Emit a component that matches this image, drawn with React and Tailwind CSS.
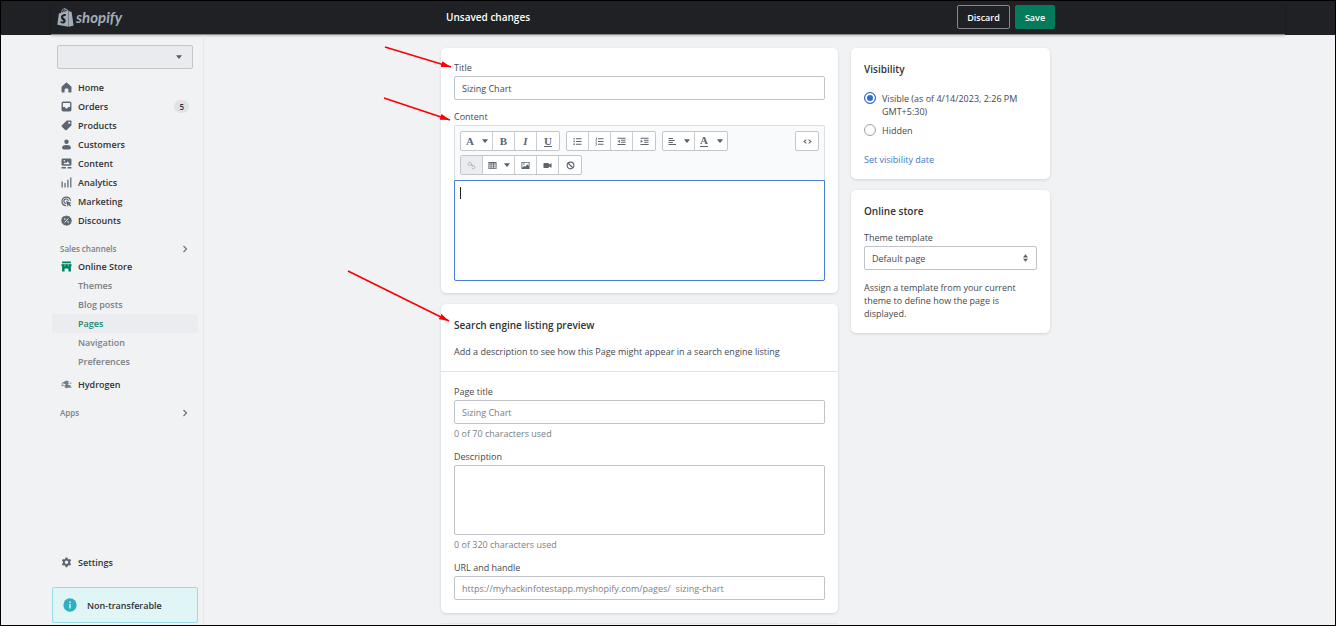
import React from 'react';
import { FaShopify } from 'react-icons/fa';

const Glyph = ({ children, className = 'size-[11px]' }) => (
  <svg viewBox="0 0 20 20" fill="currentColor" aria-hidden="true" className={`shrink-0 ${className}`}>
    {children}
  </svg>
);

const HomeIcon = () => (
  <Glyph>
    <path d="M18.5 8 10.9 1.4a1.4 1.4 0 0 0-1.8 0L1.5 8c-.4.3-.5.8-.5 1.2V17.500c0 .8.7 1.500 1.500 1.500H6.500V14a2 2 0 0 1 2-2h3a2 2 0 0 1 2 2v5h4c.8 0 1.500-.7 1.500-1.500V9.200c0-.5-.1-.9-.5-1.200Z" />
  </Glyph>
);
const OrdersIcon = () => (
  <Glyph>
    <path fillRule="evenodd" d="M4 1h12a3 3 0 0 1 3 3v12a3 3 0 0 1-3 3H4a3 3 0 0 1-3-3V4a3 3 0 0 1 3-3Zm-.500 2.500V11h2.700c.6 0 .9.300 1.100.8.400 1 1.400 1.700 2.700 1.700s2.300-.7 2.700-1.700c.2-.5.500-.8 1.100-.8h2.700V3.500H3.500Z" />
  </Glyph>
);
const ProductsIcon = () => (
  <Glyph>
    <path fillRule="evenodd" d="M11 1h7a1 1 0 0 1 1 1v7c0 .5-.2 1-.6 1.400l-8 8a2 2 0 0 1-2.800 0l-6-6a2 2 0 0 1 0-2.800l8-8C10 1.200 10.500 1 11 1Zm4 6a2 2 0 1 0 0-4 2 2 0 0 0 0 4Z" />
  </Glyph>
);
const CustomersIcon = () => (
  <Glyph>
    <circle cx="10" cy="5" r="4" />
    <path d="M2 15.500c0-3 3.500-4.500 8-4.500s8 1.500 8 4.500c0 2-1.300 3.500-3.300 3.500H5.300C3.300 19 2 17.500 2 15.500Z" />
  </Glyph>
);
const ContentIcon = () => (
  <Glyph>
    <path fillRule="evenodd" d="M3 1h14a2 2 0 0 1 2 2v9a2 2 0 0 1-2 2H3a2 2 0 0 1-2-2V3a2 2 0 0 1 2-2Zm1 10.500h12L12.300 6 9.500 9.500 7.500 7.500 4 11.500ZM6 6.500a1.500 1.500 0 1 0 0-3 1.500 1.500 0 0 0 0 3Z" />
    <path d="M1 16.500h8V19H1zM12 16.500h7V19h-7z" />
  </Glyph>
);
const AnalyticsIcon = () => (
  <Glyph>
    <path d="M1 8h2.200v11H1zM6.200 11h2.200v8H6.200zM11.500 5h2.200v14h-2.200zM16.700 1h2.200v18h-2.200z" />
  </Glyph>
);
const MarketingIcon = () => (
  <Glyph>
    <path d="M8.500 17.500A7.800 7.800 0 1 1 17.300 8M8.300 13.300A4 4 0 1 1 13 8" fill="none" stroke="currentColor" strokeWidth="2.200" strokeLinecap="round" />
    <path d="m9 8.500 10.500 4-4 1.800 3 3-1.700 1.700-3-3-1.500 3.800L9 8.500Z" />
  </Glyph>
);
const DiscountsIcon = () => (
  <Glyph>
    <path d="m10 .5 2.300 1.600 2.800-.2 1.200 2.500 2.500 1.300-.2 2.700L20 10l-1.400 2.200.2 2.800-2.500 1.200-1.300 2.500-2.700-.2L10 19.800l-2.300-1.500-2.800.2-1.200-2.500L1.200 15l.2-2.800L0 10l1.400-2.300L1.200 5l2.500-1.300L5 1.900l2.700.2L10 .5Z" />
    <path d="m6.500 13.500 7-7" stroke="#f1f2f4" strokeWidth="1.800" />
    <circle cx="7" cy="7.200" r="1.500" fill="#f1f2f4" />
    <circle cx="13" cy="12.800" r="1.500" fill="#f1f2f4" />
  </Glyph>
);
const StoreIcon = () => (
  <Glyph className="size-[11px] text-[#008060]">
    <path d="M2 1h16v3.500H2zM1 5.500h18V8a3.500 3.500 0 0 1-1 2.500V19h-4.500v-4a1.500 1.500 0 0 0-1.500-1.500H8A1.500 1.500 0 0 0 6.500 15v4H2v-8.500A3.500 3.500 0 0 1 1 8V5.500Z" />
    <path d="M7 6v3.500M13 6v3.500M1 5h18" stroke="#f1f2f4" strokeWidth="1" />
  </Glyph>
);
const HydrogenIcon = () => (
  <Glyph>
    <path d="M10 2.500 15 5l-2.500 1.500L15 7.800l-3.500 1.700 7.500 3.300L10.500 17l-5-2.500L8 13.300l-2.500-1.500L9 10 2 7l8-4.500Z" opacity=".85" />
    <path d="M1 12h4M1 9h3M14 15h5M16 7.500h3" stroke="currentColor" strokeWidth="1.500" />
  </Glyph>
);
const SettingsIcon = () => (
  <Glyph>
    <path fillRule="evenodd" d="M8.300.8h3.400l.6 2.600 1.800 1 2.500-.8 1.800 3-2 1.900v2.200l2 1.900-1.800 3-2.500-.8-1.800 1-.6 2.700H8.300l-.6-2.700-1.800-1-2.500.8-1.800-3 2-1.900V8.500l-2-1.900 1.800-3 2.500.8 1.800-1L8.300.8ZM10 12.800a3.200 3.200 0 1 0 0-6.400 3.200 3.200 0 0 0 0 6.400Z" />
  </Glyph>
);
const Chevron = () => (
  <svg viewBox="0 0 8 8" aria-hidden="true" className="size-[8px]">
    <path d="m2.500 1 3 3-3 3" fill="none" stroke="#6d7378" strokeWidth="1.200" />
  </svg>
);
const Caret = () => (
  <svg viewBox="0 0 8 5" aria-hidden="true" className="h-[4px] w-[6px] shrink-0">
    <path d="M0 0h8L4 5z" fill="#565c63" />
  </svg>
);

const mainNav = [
  ['Home', HomeIcon],
  ['Orders', OrdersIcon, '5'],
  ['Products', ProductsIcon],
  ['Customers', CustomersIcon],
  ['Content', ContentIcon],
  ['Analytics', AnalyticsIcon],
  ['Marketing', MarketingIcon],
  ['Discounts', DiscountsIcon],
];
const storeNav = ['Themes', 'Blog posts', 'Pages', 'Navigation', 'Preferences'];

function NavLink({ label, Icon, badge }) {
  return (
    <a href="#" className="flex h-[19px] items-center gap-[6px] pl-[9px] pr-[9px] font-semibold text-[#303236]">
      <span className="flex text-[#5c6670]"><Icon /></span>
      {label}
      {badge && (
        <span className="ml-auto rounded-full bg-[#e0e3e6] px-[5px] leading-[13px] text-[8px]">{badge}</span>
      )}
    </a>
  );
}

function SectionLink({ label }) {
  return (
    <a href="#" className="mt-[10px] flex h-[17px] items-center justify-between pl-[8px] pr-[9px] text-[8px] font-semibold text-[#7b8188]">
      {label}
      <Chevron />
    </a>
  );
}

function Sidebar() {
  return (
    <aside className="flex w-[153px] shrink-0 flex-col border-r border-[#e6e7ea] pb-[2px] pl-px pr-[5px] pt-[10px]">
      <button type="button" aria-label="Switch store" className="ml-[5px] mr-[5px] flex h-[24px] items-center justify-end rounded-[2px] border border-[#c3c6cb] bg-[#eaebee] pr-[10px]">
        <Caret />
      </button>
      <nav className="flex grow flex-col">
        <div className="mt-[9px]">
          {mainNav.map(([label, Icon, badge]) => (
            <NavLink key={label} label={label} Icon={Icon} badge={badge} />
          ))}
        </div>
        <SectionLink label="Sales channels" />
        <NavLink label="Online Store" Icon={StoreIcon} />
        <ul>
          {storeNav.map((label) => (
            <li key={label}>
              <a
                href="#"
                className={
                  label === 'Pages'
                    ? 'flex h-[19px] items-center rounded-[2px] bg-[#ebecef] pl-[26px] font-semibold text-[#1c8a6b]'
                    : 'flex h-[19px] items-center pl-[26px] font-semibold text-[#7b8188]'
                }
              >
                {label}
              </a>
            </li>
          ))}
        </ul>
        <div className="mt-[4px]">
          <NavLink label="Hydrogen" Icon={HydrogenIcon} />
        </div>
        <SectionLink label="Apps" />
        <div className="mt-auto">
          <NavLink label="Settings" Icon={SettingsIcon} />
        </div>
      </nav>
      <div className="mt-[15px] flex h-[36px] items-center gap-[10px] rounded-[2px] border border-[#98dce5] bg-[#dff5f6] pl-[10px] font-semibold text-[#303236]">
        <Glyph className="size-[14px]">
          <circle cx="10" cy="10" r="9.500" fill="#2fafbf" />
          <path d="M9 8.500h2V15H9zM9 5h2v2H9z" fill="#dff5f6" />
        </Glyph>
        Non-transferable
      </div>
    </aside>
  );
}

function Card({ children }) {
  return <section className="rounded-[5px] bg-white shadow-[0_1px_3px_rgba(23,24,24,0.14)]">{children}</section>;
}
const CardTitle = ({ children }) => <h2 className="text-[10px] font-semibold leading-[18px] text-[#303236]">{children}</h2>;
const Label = ({ htmlFor, children }) => (
  <label htmlFor={htmlFor} className="block leading-[17px]">{children}</label>
);

const ToolGroup = ({ children }) => (
  <div className="flex h-[20px] divide-x divide-[#c9ccd1] overflow-hidden rounded-[2px] border border-[#c3c7cc] bg-white text-[#5c6670]">
    {children}
  </div>
);
const Tool = ({ label, children, disabled }) => (
  <button
    type="button"
    aria-label={label}
    disabled={disabled}
    className="flex w-[22px] items-center justify-center disabled:bg-[#ebecef] disabled:text-[#b4b8bd]"
  >
    {children}
  </button>
);
const MenuTool = ({ label, children }) => (
  <button type="button" aria-label={label} className="flex w-[32px] items-center justify-between pl-[5px] pr-[4px]">
    {children}
    <Caret />
  </button>
);

const Serif = ({ className, children }) => (
  <span className={`font-['Liberation_Serif',serif] text-[11px] leading-none ${className}`}>{children}</span>
);
const small = 'size-[9px]';

function Toolbar() {
  return (
    <div className="flex flex-col gap-[4px] rounded-t-[2px] border border-b-0 border-[#dcdfe3] bg-[#f9fafb] px-[5px] py-[5px]">
      <div className="flex gap-[6px]">
        <ToolGroup>
          <MenuTool label="Formatting"><Serif className="font-bold">A</Serif></MenuTool>
          <Tool label="Bold"><Serif className="font-bold">B</Serif></Tool>
          <Tool label="Italic"><Serif className="font-bold italic">I</Serif></Tool>
          <Tool label="Underline"><Serif className="font-bold underline">U</Serif></Tool>
        </ToolGroup>
        <ToolGroup>
          <Tool label="Bulleted list">
            <Glyph className={small}><path d="M1 2.500h3v3H1zM1 8.500h3v3H1zM1 14.500h3v3H1zM6.500 3H19v2.200H6.500zM6.500 9H19v2.200H6.500zM6.500 15H19v2.200H6.500z" /></Glyph>
          </Tool>
          <Tool label="Numbered list">
            <Glyph className={small}><path d="M2 1h2v5H2zM1 8h3v1.500L2.500 11H4v1H1v-1l1.500-2H1zM1 14h3v5H1v-1h1.500v-3H1zM6.500 3H19v2.200H6.500zM6.500 9H19v2.200H6.500zM6.500 15H19v2.200H6.500z" /></Glyph>
          </Tool>
          <Tool label="Outdent">
            <Glyph className={small}><path d="M1 1.500h18V4H1zM9 6h10v2.200H9zM9 10.500h10v2.200H9zM1 15.500h18V18H1zM6.500 6v7.500L1.500 9.700z" /></Glyph>
          </Tool>
          <Tool label="Indent">
            <Glyph className={small}><path d="M1 1.500h18V4H1zM9 6h10v2.200H9zM9 10.500h10v2.200H9zM1 15.500h18V18H1zM1.500 6v7.500l5-3.800z" /></Glyph>
          </Tool>
        </ToolGroup>
        <ToolGroup>
          <MenuTool label="Alignment">
            <Glyph className={small}><path d="M1 2h10v2.500H1zM1 6.500h14V9H1zM1 11h10v2.500H1zM1 15.500h17V18H1z" /></Glyph>
          </MenuTool>
          <MenuTool label="Color"><Serif className="border-b border-current font-bold">A</Serif></MenuTool>
        </ToolGroup>
        <div className="ml-auto">
          <ToolGroup>
            <Tool label="Show HTML">
              <Glyph className={small}><path d="M7.500 6 2.500 10l5 4M12.500 6l5 4-5 4" fill="none" stroke="currentColor" strokeWidth="2.400" /></Glyph>
            </Tool>
          </ToolGroup>
        </div>
      </div>
      <div className="flex">
        <ToolGroup>
          <Tool label="Insert link" disabled>
            <Glyph className={small}><path d="M9.500 9.500a4 4 0 1 0-3 1.500M10.500 10.500a4 4 0 1 1 0 5.500M6.500 6.500l7 7" fill="none" stroke="currentColor" strokeWidth="2" /></Glyph>
          </Tool>
          <MenuTool label="Insert table">
            <Glyph className={small}><path fillRule="evenodd" d="M1 2h18v16H1V2Zm1.700 3.500V8H6V5.500H2.700Zm5 0V8h4V5.500h-4Zm5.700 0V8h4V5.500h-4ZM2.700 9.700V12H6V9.700H2.700Zm5 0V12h4V9.700h-4Zm5.700 0V12h4V9.700h-4ZM2.700 13.700v2.600H6v-2.600H2.700Zm5 0v2.600h4v-2.600h-4Zm5.700 0v2.600h4v-2.600h-4Z" /></Glyph>
          </MenuTool>
          <Tool label="Insert image">
            <Glyph className={small}><path fillRule="evenodd" d="M1 2h18v16H1V2Zm2 2v11l4-4.500 2.500 2.500L14 7l3 4V4H3Zm3.500 4.500a1.700 1.700 0 1 0 0-3.400 1.700 1.700 0 0 0 0 3.400Z" /></Glyph>
          </Tool>
          <Tool label="Insert video">
            <Glyph className={small}><path d="M2.500 4.500h9A1.500 1.500 0 0 1 13 6v2L19 5v10l-6-3v2a1.500 1.500 0 0 1-1.500 1.500h-9A1.500 1.500 0 0 1 1 14V6a1.500 1.500 0 0 1 1.500-1.500Z" /></Glyph>
          </Tool>
          <Tool label="Clear formatting">
            <Glyph className={small}><path d="M10 2.500a7.500 7.500 0 1 1 0 15 7.500 7.500 0 0 1 0-15ZM5 5l10 10" fill="none" stroke="currentColor" strokeWidth="2.500" /></Glyph>
          </Tool>
        </ToolGroup>
      </div>
    </div>
  );
}

const field = 'block w-full rounded-[2px] border border-[#c0c3c8] bg-white px-[7px]';

function MainColumn() {
  return (
    <div className="flex min-w-0 flex-1 flex-col gap-[11px]">
      <Card>
        <div className="px-[13px] pb-[12px] pt-[11px]">
          <Label htmlFor="title">Title</Label>
          <input id="title" defaultValue="Sizing Chart" className={`${field} h-[24px]`} />
          <div className="mt-[8px]">
            <Label htmlFor="content">Content</Label>
          </div>
          <Toolbar />
          <div className="relative">
            <textarea id="content" className="block h-[101px] w-full resize-none rounded-b-[2px] border border-[#4680d2] bg-white px-[6px] py-[6px] outline-none" />
            <span className="absolute left-[6px] top-[7px] h-[12px] w-px bg-[#202223]" />
          </div>
        </div>
      </Card>
      <Card>
        <div className="border-b border-[#e1e3e5] px-[13px] pb-[10px] pt-[12px]">
          <CardTitle>Search engine listing preview</CardTitle>
          <p className="mt-[9px] leading-[18px]">Add a description to see how this Page might appear in a search engine listing</p>
        </div>
        <div className="px-[13px] pb-[13px] pt-[11px]">
          <Label htmlFor="page-title">Page title</Label>
          <input id="page-title" placeholder="Sizing Chart" className={`${field} h-[24px] placeholder:text-[#7b8085]`} />
          <p className="mb-[6px] mt-px leading-[17px] text-[#7b8085]">0 of 70 characters used</p>
          <Label htmlFor="description">Description</Label>
          <textarea id="description" className={`${field} h-[70px] resize-none`} />
          <p className="mb-[6px] mt-px leading-[17px] text-[#7b8085]">0 of 320 characters used</p>
          <Label htmlFor="handle">URL and handle</Label>
          <div className={`${field} h-[24px] text-[#7b8085]`}>
            <div className="flex h-full items-center gap-[5px]">
              <span>https://myhackinfotestapp.myshopify.com/pages/</span>
              <input id="handle" defaultValue="sizing-chart" className="min-w-0 flex-1 outline-none" />
            </div>
          </div>
        </div>
      </Card>
      <div className="-mt-px h-[2px] border-t border-[#e4e6e8]" />
    </div>
  );
}

const radio =
  'size-[12px] shrink-0 appearance-none rounded-full border border-[#9da2a8] bg-white checked:border-[#2c6ecb] checked:bg-[#2c6ecb] checked:shadow-[inset_0_0_0_2px_white]';

function SideColumn() {
  return (
    <div className="flex w-[199px] shrink-0 flex-col gap-[11px]">
      <Card>
        <div className="px-[13px] pb-[13px] pt-[12px]">
          <CardTitle>Visibility</CardTitle>
          <label className="mt-[14px] flex gap-[6px] leading-[13px]">
            <input type="radio" name="visibility" defaultChecked className={radio} />
            <span>Visible (as of 4/14/2023, 2:26 PM GMT+5:30)</span>
          </label>
          <label className="mt-[6px] flex gap-[6px] leading-[13px]">
            <input type="radio" name="visibility" className={radio} />
            <span>Hidden</span>
          </label>
          <a href="#" className="mt-[16px] block leading-[13px] text-[#4274c4]">Set visibility date</a>
        </div>
      </Card>
      <Card>
        <div className="px-[13px] pb-[13px] pt-[12px]">
          <CardTitle>Online store</CardTitle>
          <div className="mt-[9px]">
            <Label htmlFor="template">Theme template</Label>
          </div>
          <div className="relative">
            <select id="template" className={`${field} h-[24px] appearance-none`}>
              <option>Default page</option>
            </select>
            <svg viewBox="0 0 8 12" aria-hidden="true" className="pointer-events-none absolute right-[9px] top-[8px] h-[8px] w-[5px]">
              <path d="M0 5h8L4 0zM0 7h8l-4 5z" fill="#5c5f62" />
            </svg>
          </div>
          <p className="mt-[11px] leading-[13px]">Assign a template from your current theme to define how the page is displayed.</p>
        </div>
      </Card>
    </div>
  );
}

function Header() {
  return (
    <header className="h-[34px] bg-[#202124]">
      <div className="mx-[50px] flex h-full border-b border-[#8a8b8d] pb-px shadow-[0_1px_2px_rgba(0,0,0,0.2)]">
        <a href="#" className="flex w-[153px] shrink-0 items-center gap-px pl-[5px] text-[#a3adb8]">
          <FaShopify className="size-[19px]" aria-hidden="true" />
          <span className="font-['Lato','Open_Sans',sans-serif] text-[15px] font-bold italic leading-none">shopify</span>
        </a>
        <div className="flex flex-1 items-center justify-center pl-[12px]">
          <div className="flex w-full max-w-[609px] items-center gap-[5px] font-semibold text-white">
            <span className="mr-auto text-[10px]">Unsaved changes</span>
            <button type="button" className="h-[24px] w-[53px] rounded-[2px] border border-[#85888c]">Discard</button>
            <button type="button" className="h-[24px] w-[40px] rounded-[2px] bg-[#047b5d]">Save</button>
          </div>
        </div>
      </div>
    </header>
  );
}

function Arrows() {
  const arrows = [
    [384, 46, 450, 66],
    [383, 97, 449, 119],
    [347, 270, 448, 320],
  ];
  return (
    <svg aria-hidden="true" className="pointer-events-none absolute left-0 top-0 h-[340px] w-[470px]">
      <defs>
        <marker id="tip" viewBox="0 0 10 6" refX="10" refY="3" markerWidth="10" markerHeight="6" markerUnits="userSpaceOnUse" orient="auto">
          <path d="M0 0 10 3 0 6z" fill="#fb0007" />
        </marker>
      </defs>
      {arrows.map(([x1, y1, x2, y2]) => (
        <path key={y1} d={`M${x1} ${y1}L${x2} ${y2}`} stroke="#fb0007" strokeWidth="1.700" markerEnd="url(#tip)" />
      ))}
    </svg>
  );
}

export default function App() {
  return (
    <div className="relative flex min-h-screen flex-col border border-black bg-[#f1f2f4] font-['Open_Sans','Noto_Sans',sans-serif] text-[9px] leading-[13px] text-[#46494d]">
      <Header />
      <div className="mx-[50px] flex grow">
        <Sidebar />
        <main className="flex flex-1 justify-center pl-[2px] pt-[13px]">
          <div className="flex w-full max-w-[609px] gap-[13px]">
            <MainColumn />
            <SideColumn />
          </div>
        </main>
      </div>
      <Arrows />
    </div>
  );
}
